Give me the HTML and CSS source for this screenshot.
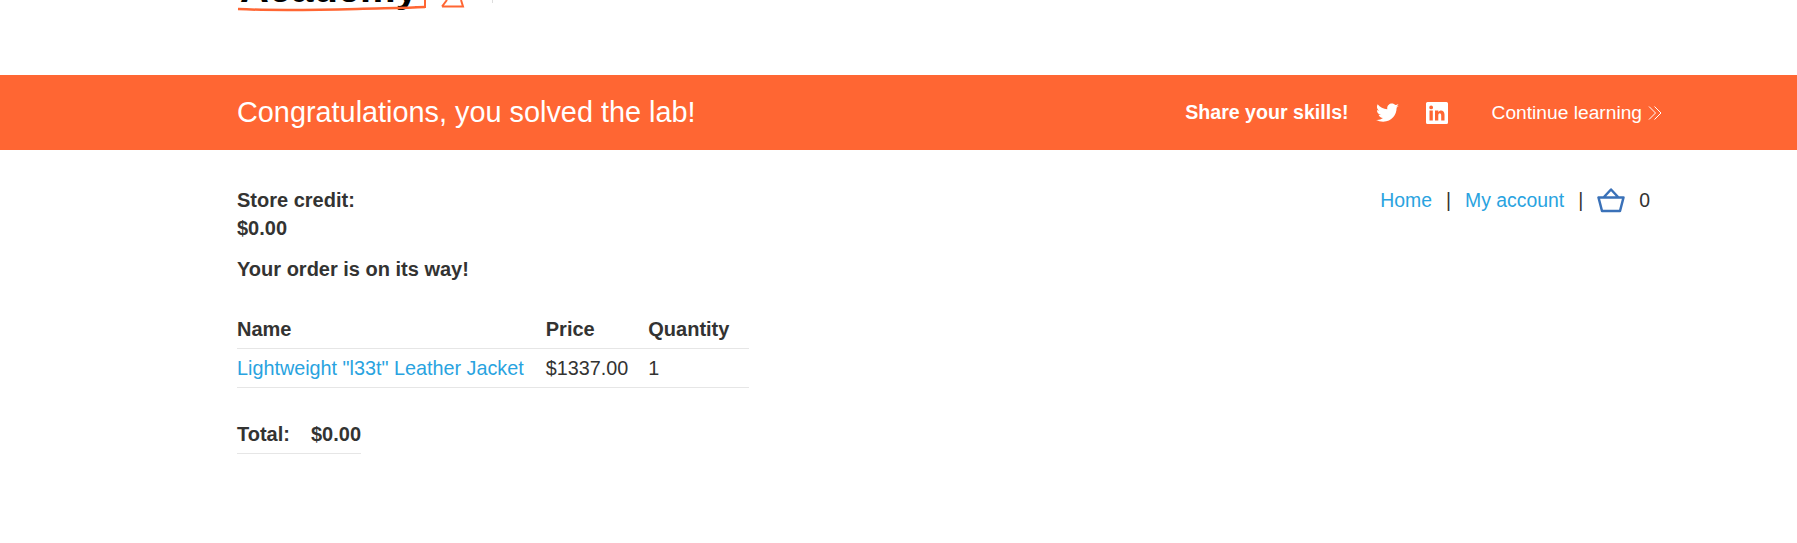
FILE: index.html
```html
<!DOCTYPE html>
<html lang="en">
<head>
    <meta charset="UTF-8">
    <title>Lab solved</title>
    <link rel="stylesheet" href="styles.css">
</head>
<body>
    <header class="logo-bar">
        <div class="logo">
            <span class="logo-word">Academy</span>
            <svg class="logo-mark" width="270" height="14" viewBox="0 0 270 14">
                <path d="M1 9C40 11 80 10 120 9S170 8 188 7" fill="none" stroke="#ff6633" stroke-width="2.500"/>
                <path d="M178 7H188V0" fill="none" stroke="#ff6633" stroke-width="2"/>
                <path d="M205 6.500L210 0M205 6.500H226L224 0" fill="none" stroke="#ff6633" stroke-width="2"/>
                <path d="M255.500 0V3" fill="none" stroke="#dddddd" stroke-width="1"/>
            </svg>
        </div>
    </header>

    <section class="banner">
        <div class="banner-inner">
            <h4 class="banner-title">Congratulations, you solved the lab!</h4>
            <div class="banner-right">
                <span class="share-label">Share your skills!</span>
                <svg class="share-icon" width="23" height="20" viewBox="0 0 24 20">
                    <path fill="#fff" d="M24 2.400c-.9.4-1.800.7-2.800.8 1-.6 1.800-1.600 2.200-2.700-1 .6-2 1-3.100 1.200C19.300.7 18 0 16.600 0c-2.700 0-4.900 2.200-4.900 4.900 0 .4 0 .8.100 1.100C7.700 5.800 4.100 3.900 1.700.9c-.4.700-.7 1.600-.7 2.500 0 1.700.9 3.200 2.200 4.100-.8 0-1.600-.2-2.200-.6v.1c0 2.400 1.700 4.400 3.900 4.800-.4.100-.8.200-1.300.2-.3 0-.6 0-.9-.1.600 2 2.400 3.400 4.600 3.400-1.700 1.300-3.800 2.100-6.100 2.100-.4 0-.8 0-1.200-.1C2.200 18.200 4.800 19 7.500 19c9.100 0 14-7.500 14-14v-.6c1-.7 1.800-1.600 2.500-2z"/>
                </svg>
                <svg class="share-icon" width="22" height="22" viewBox="0 0 22 22">
                    <path fill="#fff" fill-rule="evenodd" d="M1.500 0H20.500A1.500 1.500 0 0 1 22 1.500V20.500A1.500 1.500 0 0 1 20.500 22H1.500A1.500 1.500 0 0 1 0 20.500V1.500A1.500 1.500 0 0 1 1.500 0ZM3.500 8.500V18.500H6.800V8.500ZM5.150 3.500A1.900 1.900 0 1 0 5.150 7.300A1.900 1.900 0 1 0 5.150 3.500ZM9 8.500V18.500H12.300V13.200C12.300 10.500 15.200 10.400 15.200 13.200V18.500H18.500V12.400C18.500 7.700 13.800 7.500 12.300 10V8.500Z"/>
                </svg>
                <a class="continue" href="#">Continue learning
                    <svg width="16" height="16" viewBox="0 0 16 16">
                        <path d="M2 1.500L8.500 8L2 14.500M7.500 1.500L14 8L7.500 14.500" fill="none" stroke="#fff" stroke-width="1"/>
                    </svg>
                </a>
            </div>
        </div>
    </section>

    <main class="container">
        <div class="top-row">
            <p class="credit">Store credit:<br>$0.00</p>
            <nav class="top-links">
                <a href="#">Home</a>
                <span>|</span>
                <a href="#">My account</a>
                <span>|</span>
                <svg class="cart" width="28" height="25" viewBox="0 0 28 25">
                    <path d="M1.500 9.500H26.500L23 23H5ZM6.500 9.500L14 1.500L21.500 9.500" fill="none" stroke="#3a71b8" stroke-width="2.500" stroke-linejoin="round"/>
                </svg>
                <span>0</span>
            </nav>
        </div>
        <p class="order-msg">Your order is on its way!</p>

        <table class="order-table">
            <tr>
                <th class="col-name">Name</th>
                <th>Price</th>
                <th>Quantity</th>
            </tr>
            <tr>
                <td class="col-name"><a href="#">Lightweight "l33t" Leather Jacket</a></td>
                <td>$1337.00</td>
                <td>1</td>
            </tr>
        </table>

        <table class="total-table">
            <tr>
                <th>Total:</th>
                <th>$0.00</th>
            </tr>
        </table>
    </main>
</body>
</html>
```

FILE: styles.css
```css
body {
    margin: 0;
    font-family: "Liberation Sans", Arial, sans-serif;
    font-size: 19.8px;
    color: #333332;
    background: #fff;
}
a {
    color: #29a3e0;
    text-decoration: none;
}
.logo-bar {
    height: 75px;
    overflow: hidden;
    padding-left: 237px;
}
.logo {
    display: flow-root;
    position: relative;
    height: 14px;
}
.logo-word {
    display: block;
    margin: -32px 0 0 3px;
    font-size: 40px;
    font-weight: bold;
    line-height: 40px;
    color: #000;
}
.logo-mark {
    position: absolute;
    left: 0;
    top: 0;
}
.banner {
    background: #ff6633;
    height: 75px;
    display: flex;
    align-items: center;
}
.banner-inner {
    display: flex;
    justify-content: space-between;
    align-items: center;
    width: 100%;
    padding: 0 134px 0 237px;
    box-sizing: border-box;
}
.banner-title {
    margin: 0;
    font-size: 28.85px;
    font-weight: normal;
    color: #fff;
}
.banner-right {
    display: flex;
    align-items: center;
    color: #fff;
}
.share-label {
    font-weight: bold;
    font-size: 19.6px;
}
.share-icon {
    margin-left: 27px;
}
.continue {
    color: #fff;
    font-size: 19.2px;
    margin-left: 44px;
    display: flex;
    align-items: center;
    gap: 5px;
}
.container {
    padding: 0 147px 0 237px;
}
.top-row {
    display: flex;
    justify-content: space-between;
    align-items: flex-start;
    padding-top: 36px;
}
.credit {
    margin: 0;
    font-size: 20px;
    font-weight: bold;
    line-height: 28px;
}
.top-links {
    display: flex;
    align-items: center;
    gap: 14px;
    height: 28px;
    font-size: 19.4px;
}
.order-msg {
    margin: 13px 0 0;
    font-size: 20px;
    font-weight: bold;
    line-height: 28px;
}
.order-table {
    border-collapse: collapse;
    margin-top: 27px;
}
.order-table th, .order-table td, .total-table th {
    text-align: left;
    padding: 0 20px 0 0;
    height: 38px;
    border-bottom: 1px solid #e6e6e6;
    white-space: nowrap;
}
.order-table .col-name {
    padding-right: 22px;
}
.order-table th, .total-table th {
    font-size: 20px;
}
.total-table th:first-child {
    padding-right: 21px;
}
.total-table th:last-child {
    padding-right: 0;
}
.total-table {
    border-collapse: collapse;
    margin-top: 27px;
}
```
